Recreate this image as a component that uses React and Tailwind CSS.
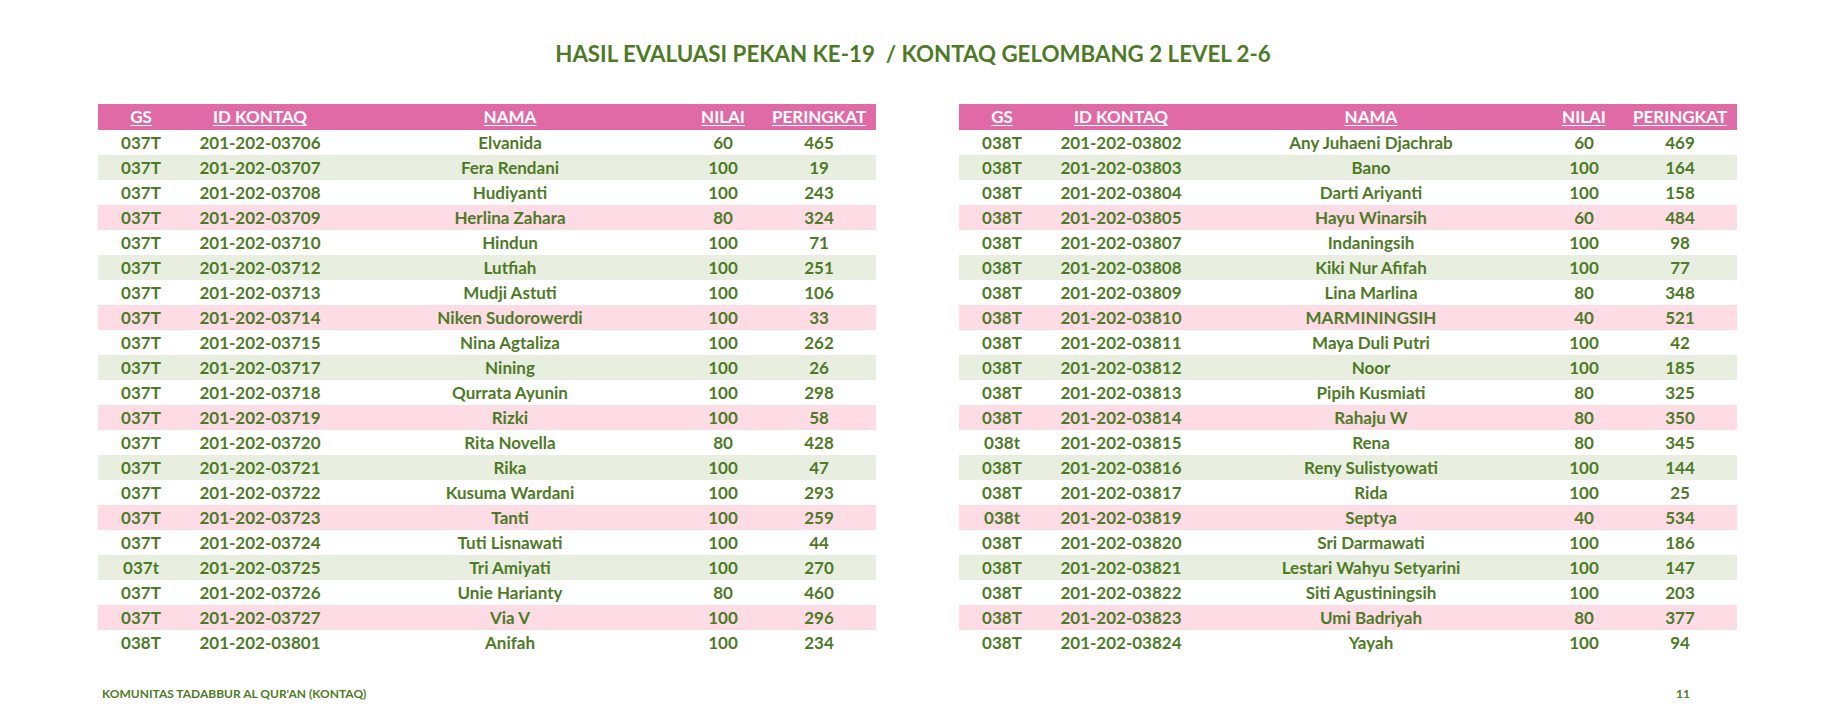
import React from "react";

const leftRows = [
  ["037T", "201-202-03706", "Elvanida", "60", "465"],
  ["037T", "201-202-03707", "Fera Rendani", "100", "19"],
  ["037T", "201-202-03708", "Hudiyanti", "100", "243"],
  ["037T", "201-202-03709", "Herlina Zahara", "80", "324"],
  ["037T", "201-202-03710", "Hindun", "100", "71"],
  ["037T", "201-202-03712", "Lutfiah", "100", "251"],
  ["037T", "201-202-03713", "Mudji Astuti", "100", "106"],
  ["037T", "201-202-03714", "Niken Sudorowerdi", "100", "33"],
  ["037T", "201-202-03715", "Nina Agtaliza", "100", "262"],
  ["037T", "201-202-03717", "Nining", "100", "26"],
  ["037T", "201-202-03718", "Qurrata Ayunin", "100", "298"],
  ["037T", "201-202-03719", "Rizki", "100", "58"],
  ["037T", "201-202-03720", "Rita Novella", "80", "428"],
  ["037T", "201-202-03721", "Rika", "100", "47"],
  ["037T", "201-202-03722", "Kusuma Wardani", "100", "293"],
  ["037T", "201-202-03723", "Tanti", "100", "259"],
  ["037T", "201-202-03724", "Tuti Lisnawati", "100", "44"],
  ["037t", "201-202-03725", "Tri Amiyati", "100", "270"],
  ["037T", "201-202-03726", "Unie Harianty", "80", "460"],
  ["037T", "201-202-03727", "Via V", "100", "296"],
  ["038T", "201-202-03801", "Anifah", "100", "234"],
];

const rightRows = [
  ["038T", "201-202-03802", "Any Juhaeni Djachrab", "60", "469"],
  ["038T", "201-202-03803", "Bano", "100", "164"],
  ["038T", "201-202-03804", "Darti Ariyanti", "100", "158"],
  ["038T", "201-202-03805", "Hayu Winarsih", "60", "484"],
  ["038T", "201-202-03807", "Indaningsih", "100", "98"],
  ["038T", "201-202-03808", "Kiki Nur Afifah", "100", "77"],
  ["038T", "201-202-03809", "Lina Marlina", "80", "348"],
  ["038T", "201-202-03810", "MARMININGSIH", "40", "521"],
  ["038T", "201-202-03811", "Maya Duli Putri", "100", "42"],
  ["038T", "201-202-03812", "Noor", "100", "185"],
  ["038T", "201-202-03813", "Pipih Kusmiati", "80", "325"],
  ["038T", "201-202-03814", "Rahaju W", "80", "350"],
  ["038t", "201-202-03815", "Rena", "80", "345"],
  ["038T", "201-202-03816", "Reny Sulistyowati", "100", "144"],
  ["038T", "201-202-03817", "Rida", "100", "25"],
  ["038t", "201-202-03819", "Septya", "40", "534"],
  ["038T", "201-202-03820", "Sri Darmawati", "100", "186"],
  ["038T", "201-202-03821", "Lestari Wahyu Setyarini", "100", "147"],
  ["038T", "201-202-03822", "Siti Agustiningsih", "100", "203"],
  ["038T", "201-202-03823", "Umi Badriyah", "80", "377"],
  ["038T", "201-202-03824", "Yayah", "100", "94"],
];

// striping repeats every 4 rows: white, green, white, pink
const rowBg = ["bg-white", "bg-[#e9efe0]", "bg-white", "bg-[#fddce6]"];

const ScoreTable = ({ rows }) => {
  return (
    <table className="w-[778px] table-fixed border-collapse text-[17px] font-bold">
      <colgroup>
        <col className="w-[86px]" />
        <col className="w-[152px]" />
        <col className="w-[348px]" />
        <col className="w-[78px]" />
        <col className="w-[114px]" />
      </colgroup>
      <thead>
        <tr className="h-[25px] bg-[#e06aa6] text-white">
          <th className="p-0 font-bold underline underline-offset-2">GS</th>
          <th className="p-0 font-bold underline underline-offset-2">ID KONTAQ</th>
          <th className="p-0 font-bold underline underline-offset-2">NAMA</th>
          <th className="p-0 font-bold underline underline-offset-2">NILAI</th>
          <th className="p-0 font-bold underline underline-offset-2">PERINGKAT</th>
        </tr>
      </thead>
      <tbody>
        {rows.map((r, i) => (
          <tr key={r[1]} className={`h-[25px] ${rowBg[i % 4]}`}>
            {r.map((cell, j) => (
              <td key={j} className="p-0 text-center leading-[25px] whitespace-nowrap">
                {cell}
              </td>
            ))}
          </tr>
        ))}
      </tbody>
    </table>
  );
};

const App = () => {
  return (
    <div className="w-[1839px] h-[727px] bg-white text-[#4e7a27] font-['Lato','Open_Sans',sans-serif]">
      {/* Title */}
      <div className="h-[104px] pt-[40px] pr-[13px] text-center">
        <h1 className="text-[22.3px] leading-[28px] font-bold whitespace-pre">
          HASIL EVALUASI PEKAN KE-19  / KONTAQ GELOMBANG 2 LEVEL 2-6
        </h1>
      </div>

      {/* Tables */}
      <div className="flex gap-[83px] pl-[98px]">
        <ScoreTable rows={leftRows} />
        <ScoreTable rows={rightRows} />
      </div>

      {/* Footer */}
      <div className="flex justify-between pl-[102px] pr-[149px] pt-[31px] text-[12px] leading-[16px] font-bold">
        <p>KOMUNITAS TADABBUR AL QUR'AN (KONTAQ)</p>
        <p>11</p>
      </div>
    </div>
  );
};

export default App;
